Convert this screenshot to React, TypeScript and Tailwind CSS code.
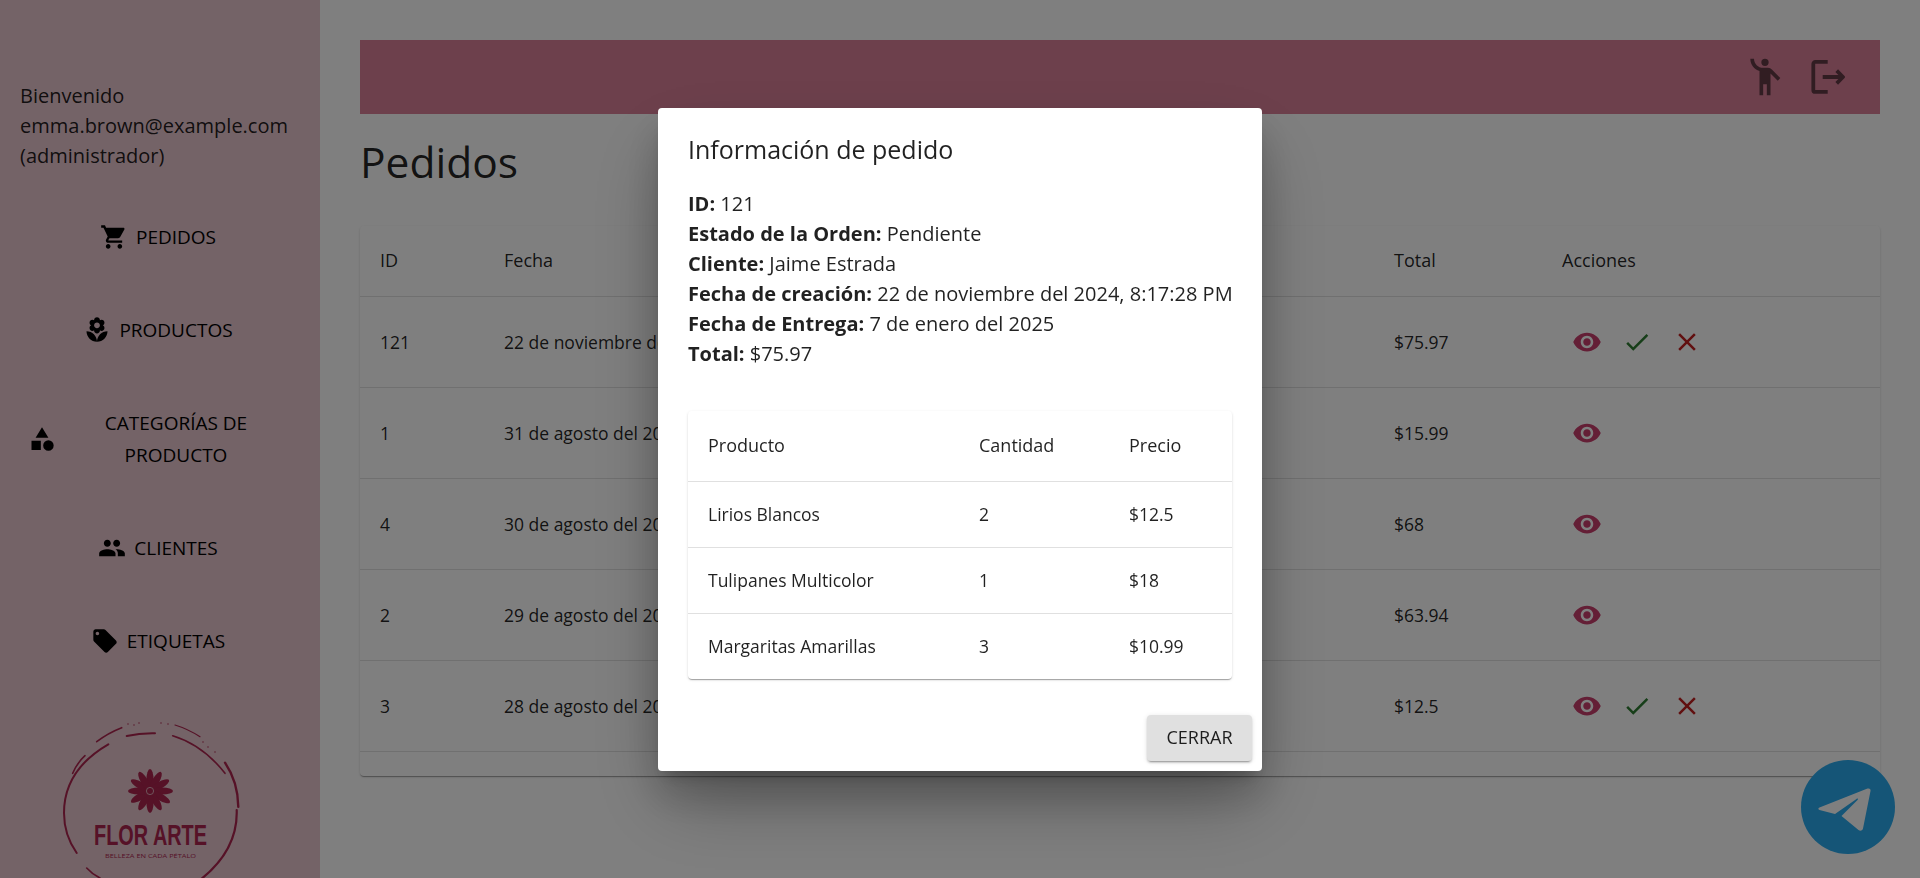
const paths = {
    cart: 'M7 18c-1.1 0-1.99.9-1.99 2S5.9 22 7 22s2-.9 2-2-.9-2-2-2zM1 2v2h2l3.6 7.59-1.35 2.45c-.16.28-.25.61-.25.96 0 1.1.9 2 2 2h12v-2H7.42c-.14 0-.25-.11-.25-.25l.03-.12.9-1.63h7.45c.75 0 1.41-.41 1.75-1.03l3.58-6.49c.08-.14.12-.31.12-.48 0-.55-.45-1-1-1H5.21l-.94-2H1zm16 16c-1.1 0-1.99.9-1.99 2s.89 2 1.99 2 2-.9 2-2-.9-2-2-2z',
    florist: 'M12 22c4.97 0 9-4.03 9-9-4.97 0-9 4.03-9 9zM5.6 10.25c0 1.38 1.12 2.5 2.5 2.5.53 0 1.01-.16 1.42-.44l-.02.19c0 1.38 1.12 2.5 2.5 2.5s2.5-1.12 2.5-2.5l-.02-.19c.4.28.89.44 1.42.44 1.38 0 2.5-1.12 2.5-2.5 0-1-.59-1.85-1.43-2.25.84-.4 1.43-1.25 1.43-2.25 0-1.38-1.12-2.5-2.5-2.5-.53 0-1.01.16-1.42.44l.02-.19C14.5 2.12 13.38 1 12 1S9.5 2.12 9.5 3.5l.02.19c-.4-.28-.89-.44-1.42-.44-1.38 0-2.5 1.12-2.5 2.5 0 1 .59 1.85 1.43 2.25-.84.4-1.43 1.25-1.43 2.25zM12 5.5c1.38 0 2.5 1.12 2.5 2.5s-1.12 2.5-2.5 2.5S9.5 9.38 9.5 8s1.12-2.5 2.5-2.5zM3 13c0 4.97 4.03 9 9 9 0-4.97-4.03-9-9-9z',
    category: 'M12 2l-5.5 9h11zM17.5 13a4.5 4.5 0 1 0 0 9 4.5 4.5 0 0 0 0-9zM3 13.5h8v8H3z',
    people: 'M16 11c1.66 0 2.99-1.34 2.99-3S17.66 5 16 5c-1.66 0-3 1.34-3 3s1.34 3 3 3zm-8 0c1.66 0 2.99-1.34 2.99-3S9.66 5 8 5C6.34 5 5 6.34 5 8s1.34 3 3 3zm0 2c-2.33 0-7 1.17-7 3.5V19h14v-2.5c0-2.33-4.67-3.5-7-3.5zm8 0c-.29 0-.62.02-.97.05 1.16.84 1.97 1.97 1.97 3.45V19h6v-2.5c0-2.33-4.67-3.5-7-3.5z',
    tag: 'M21.41 11.58l-9-9C12.05 2.22 11.55 2 11 2H4c-1.1 0-2 .9-2 2v7c0 .55.22 1.05.59 1.42l9 9c.36.36.86.58 1.41.58.55 0 1.05-.22 1.41-.59l7-7c.37-.36.59-.86.59-1.41 0-.55-.23-1.06-.59-1.42zM5.5 7C4.67 7 4 6.33 4 5.5S4.67 4 5.5 4 7 4.67 7 5.5 6.33 7 5.5 7z',
    eye: 'M12 4.5C7 4.5 2.73 7.61 1 12c1.73 4.39 6 7.5 11 7.5s9.27-3.11 11-7.5c-1.73-4.39-6-7.5-11-7.5zM12 17c-2.76 0-5-2.24-5-5s2.24-5 5-5 5 2.24 5 5-2.24 5-5 5zm0-8c-1.66 0-3 1.34-3 3s1.34 3 3 3 3-1.34 3-3-1.34-3-3-3z',
    check: 'M9 16.17L4.83 12l-1.42 1.41L9 19 21 7l-1.41-1.41z',
    close: 'M19 6.41L17.59 5 12 10.59 6.41 5 5 6.41 10.59 12 5 17.59 6.41 19 12 13.41 17.59 19 19 17.59 13.41 12z',
    wave: 'M12 2a2 2 0 1 0 0 4 2 2 0 0 0 0-4zM15.89 8.11C15.5 7.72 14.83 7 13.53 7h-2.54C8.24 6.99 6 4.75 6 2H4c0 3.16 2.11 5.84 5 6.71V22h2v-6h2v6h2V10.05L18.95 14l1.41-1.41-4.47-4.48z',
};

function Icon({ name, className }: { name: keyof typeof paths; className?: string }) {
    return (
        <svg viewBox="0 0 24 24" fill="currentColor" className={className}>
            <path d={paths[name]} />
        </svg>
    );
}

const navItems: { icon: keyof typeof paths; label: string }[] = [
    { icon: 'cart', label: 'PEDIDOS' },
    { icon: 'florist', label: 'PRODUCTOS' },
    { icon: 'category', label: 'CATEGORÍAS DE PRODUCTO' },
    { icon: 'people', label: 'CLIENTES' },
    { icon: 'tag', label: 'ETIQUETAS' },
];

const orders = [
    { id: 121, date: '22 de noviembre del 2024, 8:17:28 PM', total: '$75.97', pending: true },
    { id: 1, date: '31 de agosto del 2024, 10:12:45 AM', total: '$15.99', pending: false },
    { id: 4, date: '30 de agosto del 2024, 4:30:10 PM', total: '$68', pending: false },
    { id: 2, date: '29 de agosto del 2024, 9:05:33 AM', total: '$63.94', pending: false },
    { id: 3, date: '28 de agosto del 2024, 1:48:02 PM', total: '$12.5', pending: true },
];

const orderInfo = [
    ['ID:', '121'],
    ['Estado de la Orden:', 'Pendiente'],
    ['Cliente:', 'Jaime Estrada'],
    ['Fecha de creación:', '22 de noviembre del 2024, 8:17:28 PM'],
    ['Fecha de Entrega:', '7 de enero del 2025'],
    ['Total:', '$75.97'],
];

const orderLines = [
    { name: 'Lirios Blancos', qty: 2, price: '$12.5' },
    { name: 'Tulipanes Multicolor', qty: 1, price: '$18' },
    { name: 'Margaritas Amarillas', qty: 3, price: '$10.99' },
];

function Logo() {
    const wine = '#ac244e';
    const arcs: [string, number][] = [
        ['M46.7 21.7Q58 13 71.7 7.7', 1.6],
        ['M76.7 16Q90 13 105 13.3', 2],
        ['M125 5Q138 9 150 16.7', 1.2],
        ['M122.7 15.7Q153 25 175 53.3', 1.6],
        ['M58.3 24.3Q14 50 14 93Q14 115 26.7 133', 2],
        ['M35 35.7Q27 43 22.7 53.3', 1.6],
        ['M175 42.7Q188 62 188.3 86.7', 2.4],
        ['M186.7 90Q188 130 150 160', 2.2],
        ['M36.7 148Q42 154 50 158', 1.6],
    ];
    const petals = [0, 30, 60, 90, 120, 150, 180, 210, 240, 270, 300, 330];
    return (
        <svg viewBox="0 0 200 200" className="mt-[49px] ml-[50px] block h-[200px] w-[200px] shrink-0">
            {arcs.map(([d, w]) => (
                <path key={d} d={d} fill="none" stroke={wine} strokeWidth={w} strokeLinecap="round" />
            ))}
            {[[78, 4], [84, 5], [89, 3], [111, 3], [118, 4], [153, 22], [158, 27], [165, 32]].map(([x, y]) => (
                <circle key={x} cx={x} cy={y} r="0.7" fill={wine} />
            ))}
            {petals.map((a) => (
                <ellipse key={a} cx="100" cy="59" rx="3.6" ry="11" fill={wine} transform={`rotate(${a} 100 71) translate(0 ${a > 60 && a < 150 ? 0 : 1})`} />
            ))}
            <circle cx="100" cy="71" r="3.6" fill="none" stroke="#e8c6ce" strokeWidth="0.8" />
            <text x="44" y="125" fontSize="30" fontWeight="700" fill={wine} textLength="113" lengthAdjust="spacingAndGlyphs" fontFamily="'Liberation Sans Narrow','Liberation Sans',sans-serif">
                FLOR ARTE
            </text>
            <text x="55" y="138" fontSize="5.6" fill={wine} textLength="91" lengthAdjust="spacingAndGlyphs" fontFamily="'Open Sans',sans-serif">
                BELLEZA EN CADA PÉTALO
            </text>
        </svg>
    );
}

function OrderModal() {
    return (
        <div className="fixed inset-0 z-10 flex items-center justify-center bg-black/50">
            <div className="w-[604px] rounded-[4px] bg-white pt-[22px] pb-[10px] text-[rgba(0,0,0,0.87)] shadow-[0_11px_15px_-7px_rgba(0,0,0,0.2),0_24px_38px_3px_rgba(0,0,0,0.14),0_36px_70px_-8px_rgba(0,0,0,0.3)]">
                <h2 className="px-[30px] text-[25px] leading-[38px]">Información de pedido</h2>
                <div className="mt-[21px] px-[30px] text-[20px] leading-[30px]">
                    {orderInfo.map(([label, value]) => (
                        <p key={label} className="whitespace-nowrap">
                            <b>{label}</b> {value}
                        </p>
                    ))}
                </div>
                <div className="mx-[30px] mt-[42px] rounded-[4px] shadow-[0_2px_1px_-1px_rgba(0,0,0,0.2),0_1px_1px_rgba(0,0,0,0.14),0_1px_3px_rgba(0,0,0,0.12)]">
                    <table className="w-full table-fixed text-left text-[17.5px]">
                        <colgroup>
                            <col className="w-[271px]" />
                            <col className="w-[150px]" />
                            <col />
                        </colgroup>
                        <thead>
                            <tr className="h-[71px] border-b border-[#e0e0e0] text-[18px]">
                                <th className="pl-5 font-medium">Producto</th>
                                <th className="pl-5 font-medium">Cantidad</th>
                                <th className="pl-5 font-medium">Precio</th>
                            </tr>
                        </thead>
                        <tbody>
                            {orderLines.map((line, i) => (
                                <tr key={line.name} className={i < orderLines.length - 1 ? 'h-[66px] border-b border-[#e0e0e0]' : 'h-[65px]'}>
                                    <td className="pl-5">{line.name}</td>
                                    <td className="pl-5">{line.qty}</td>
                                    <td className="pl-5">{line.price}</td>
                                </tr>
                            ))}
                        </tbody>
                    </table>
                </div>
                <div className="mt-[36px] flex justify-end pr-[10px]">
                    <button className="h-[46px] w-[105px] rounded-[4px] bg-[#e0e0e0] text-[18px] font-medium shadow-[0_3px_1px_-2px_rgba(0,0,0,0.2),0_2px_2px_rgba(0,0,0,0.14),0_1px_5px_rgba(0,0,0,0.12)]">
                        CERRAR
                    </button>
                </div>
            </div>
        </div>
    );
}

export default function App() {
    return (
        <div className="flex h-screen overflow-hidden bg-white font-['Open_Sans',sans-serif] text-[rgba(0,0,0,0.87)]">
            <aside className="flex w-[320px] shrink-0 flex-col overflow-hidden bg-[#e8c6ce] pt-[81px]">
                <div className="px-5 text-[20px] leading-[30px]">
                    <p>Bienvenido</p>
                    <p>emma.brown@example.com</p>
                    <p>(administrador)</p>
                </div>
                <nav className="mt-[36px] flex flex-col gap-[33px] px-5">
                    {navItems.map((item) => (
                        <div key={item.label} className="flex items-center justify-center px-3 py-[14px] text-[19px] leading-[32px] font-medium text-black">
                            <Icon name={item.icon} className="mr-2 -ml-1 size-7 shrink-0" />
                            <span className="text-center">{item.label}</span>
                        </div>
                    ))}
                </nav>
                <Logo />
            </aside>
            <main className="min-w-0 flex-1 px-10 pt-10">
                <header className="flex h-[74px] items-center justify-end gap-[24px] bg-[#da8099] pr-[35px] text-black/55">
                    <Icon name="wave" className="size-11" />
                    <svg viewBox="0 0 34 34" fill="none" stroke="currentColor" strokeWidth="3.8" strokeLinejoin="round" className="size-[34px]">
                        <path d="M16.7 1.9H4.3a2 2 0 0 0-2 2v26a2 2 0 0 0 2 2h12.4" />
                        <path d="M11.7 17H31M25.7 10.7L32 17l-6.3 6.3" />
                    </svg>
                </header>
                <h1 className="mt-[18px] text-[42.5px] leading-[60px]">Pedidos</h1>
                <div className="mt-[34px] h-[550px] rounded-[4px] shadow-[0_2px_1px_-1px_rgba(0,0,0,0.2),0_1px_1px_rgba(0,0,0,0.14),0_1px_3px_rgba(0,0,0,0.12)]">
                    <table className="w-full table-fixed text-left text-[17.5px]">
                        <colgroup>
                            <col className="w-[124px]" />
                            <col className="w-[890px]" />
                            <col className="w-[168px]" />
                            <col />
                        </colgroup>
                        <thead>
                            <tr className="h-[70px] border-b border-[#e0e0e0] text-[18px]">
                                <th className="pl-5 font-medium">ID</th>
                                <th className="pl-5 font-medium">Fecha</th>
                                <th className="pl-5 font-medium">Total</th>
                                <th className="pl-5 font-medium">Acciones</th>
                            </tr>
                        </thead>
                        <tbody>
                            {orders.map((order) => (
                                <tr key={order.id} className="h-[91px] border-b border-[#e0e0e0]">
                                    <td className="pt-[2px] pl-5">{order.id}</td>
                                    <td className="pt-[2px] pl-5">{order.date}</td>
                                    <td className="pt-[2px] pl-5">{order.total}</td>
                                    <td className="pl-5">
                                        <div className="flex">
                                            <span className="p-[10px] text-[#c83e6c]">
                                                <Icon name="eye" className="size-[30px]" />
                                            </span>
                                            {order.pending && (
                                                <>
                                                    <span className="p-[10px] text-[#2e7d32]">
                                                        <Icon name="check" className="size-[30px]" />
                                                    </span>
                                                    <span className="p-[10px] text-[#c21f1f]">
                                                        <Icon name="close" className="size-[30px]" />
                                                    </span>
                                                </>
                                            )}
                                        </div>
                                    </td>
                                </tr>
                            ))}
                        </tbody>
                    </table>
                </div>
            </main>
            <a className="fixed right-[25px] bottom-[24px] size-[94px] rounded-full bg-[#2aabee]">
                <svg viewBox="0 0 94 94" className="size-[94px]" fill="#fff">
                    <path d="M66.5 28.6L18.5 47.5C17 48.2 17 49.5 18.5 50L34 54L55.5 39C56.5 38 57.5 39 56.5 40L40.5 56L57.5 70C59.5 71.5 61.5 70.5 62 68.5L69.5 31C70 29 68.5 28 66.5 28.6Z" />
                </svg>
            </a>
            <OrderModal />
        </div>
    );
}
